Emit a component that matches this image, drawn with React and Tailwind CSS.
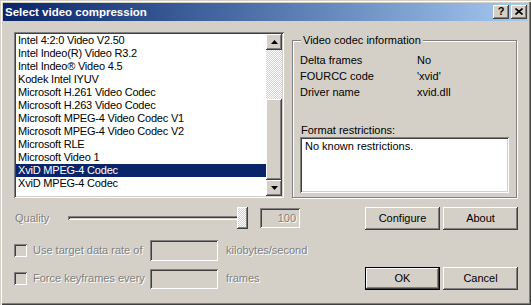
import React from "react";

const raised =
	"shadow-[inset_-1px_-1px_0_#404040,inset_1px_1px_0_#fff,inset_-2px_-2px_0_#808080]";
const sunken =
	"shadow-[inset_1px_1px_0_#808080,inset_-1px_-1px_0_#fff,inset_2px_2px_0_#404040,inset_-2px_-2px_0_#d4d0c8]";
const dim = "text-[#808080] [text-shadow:1px_1px_0_#fff]";

const codecs = [
	"Intel 4:2:0 Video V2.50",
	"Intel Indeo(R) Video R3.2",
	"Intel Indeo® Video 4.5",
	"Kodek Intel IYUV",
	"Microsoft H.261 Video Codec",
	"Microsoft H.263 Video Codec",
	"Microsoft MPEG-4 Video Codec V1",
	"Microsoft MPEG-4 Video Codec V2",
	"Microsoft RLE",
	"Microsoft Video 1",
	"XviD MPEG-4 Codec",
	"XviD MPEG-4 Codec",
];

const Arrow = ({ down }) => (
	<svg width="7" height="4" viewBox="0 0 7 4">
		<path d={down ? "M0 0H7L3.5 4Z" : "M0 4H7L3.5 0Z"} fill="#000" />
	</svg>
);

const Button = ({ children, isDefault, className = "" }) => (
	<button
		className={`h-[23px] w-[75px] bg-[#d4d0c8] text-black ${
			isDefault
				? "shadow-[inset_0_0_0_1px_#000,inset_-2px_-2px_0_#404040,inset_2px_2px_0_#fff,inset_-3px_-3px_0_#808080]"
				: raised
		} ${className}`}
	>
		{children}
	</button>
);

const App = () => {
	return (
		<div
			className="flex h-[305px] w-[531px] flex-col bg-[#d4d0c8] p-[3px] text-[11px] leading-[13px] text-black shadow-[inset_1px_1px_0_#d4d0c8,inset_2px_2px_0_#fff,inset_-1px_-1px_0_#404040,inset_-2px_-2px_0_#808080]"
			style={{ fontFamily: '"Liberation Sans", Arial, sans-serif' }}
		>
			{/* title bar */}
			<div className="flex h-[18px] items-center justify-between bg-gradient-to-r from-[#0a246a] to-[#a6caf0] pl-[2px] pr-[1px]">
				<span className="text-[11.5px] font-bold text-white">Select video compression</span>
				<div className="flex gap-[2px]">
					<div className={`flex h-[14px] w-[16px] items-center justify-center bg-[#d4d0c8] pb-[1px] text-[11px] font-bold ${raised}`}>
						?
					</div>
					<div className={`flex h-[14px] w-[16px] items-center justify-center bg-[#d4d0c8] pb-[1px] ${raised}`}>
						<svg width="8" height="7" viewBox="0 0 8 7">
							<path d="M0.5 0.5L7.5 6.5M7.5 0.5L0.5 6.5" stroke="#000" strokeWidth="1.6" />
						</svg>
					</div>
				</div>
			</div>

			<div className="flex flex-col pl-[11px]">
				{/* list + info */}
				<div className="mt-[11px] flex h-[166px]">
					<div className={`flex w-[270px] bg-white p-[2px] ${sunken}`}>
						<div className="flex-1 overflow-hidden tracking-[-0.2px]">
							{codecs.map((c, i) => (
								<div
									key={i}
									className={`h-[13px] whitespace-nowrap pl-[2px] ${
										i === 10 ? "bg-[#0a246a] text-white" : ""
									}`}
								>
									{c}
								</div>
							))}
						</div>
						<div className="flex w-[16px] flex-col">
							<div className={`flex h-[16px] items-center justify-center bg-[#d4d0c8] ${raised}`}>
								<Arrow />
							</div>
							<div className="h-[49px] bg-[repeating-conic-gradient(#d4d0c8_0_25%,#fff_0_50%)] bg-[length:2px_2px]" />
							<div className={`flex-1 bg-[#d4d0c8] ${raised}`} />
							<div className={`flex h-[16px] items-center justify-center bg-[#d4d0c8] ${raised}`}>
								<Arrow down />
							</div>
						</div>
					</div>

					<div className="relative ml-[8px] mt-[8px] flex h-[158px] w-[225px] flex-col border border-[#808080] px-[7px] shadow-[inset_1px_1px_0_#fff,1px_1px_0_#fff]">
						<span className="absolute -top-[7px] left-[8px] bg-[#d4d0c8] px-[2px]">
							Video codec information
						</span>
						<div className="pt-[11px]">
							{[
								["Delta frames", "No"],
								["FOURCC code", "'xvid'"],
								["Driver name", "xvid.dll"],
							].map(([k, v]) => (
								<div key={k} className="flex h-[16px] items-center">
									<span className="w-[117px]">{k}</span>
									<span>{v}</span>
								</div>
							))}
						</div>
						<div className="flex-1" />
						<div className="h-[13px] pl-[1px]">Format restrictions:</div>
						<div className={`mb-[4px] h-[56px] bg-white px-[5px] pt-[3px] ${sunken}`}>
							No known restrictions.
						</div>
					</div>
				</div>

				{/* quality row */}
				<div className="mt-[9px] flex h-[22px] items-center">
					<span className={`w-[54px] pl-[1px] ${dim}`}>Quality</span>
					<div className="relative h-[22px] w-[180px]">
						<div className="absolute left-0 right-[2px] top-[9px] h-[4px] shadow-[inset_1px_1px_0_#808080,inset_-1px_-1px_0_#fff,inset_2px_2px_0_#404040]" />
						<div className={`absolute right-0 top-0 h-[22px] w-[11px] bg-[repeating-conic-gradient(#d4d0c8_0_25%,#fff_0_50%)] bg-[length:2px_2px] ${raised}`} />
					</div>
					<div className={`ml-[12px] flex h-[20px] w-[40px] items-center justify-end pr-[4px] ${sunken} ${dim}`}>
						100
					</div>
					<Button className="ml-[65px]">Configure</Button>
					<Button className="ml-[3px]">About</Button>
				</div>

				{/* target data rate */}
				<div className="mt-[11px] flex h-[21px] items-center">
					<div className={`h-[13px] w-[13px] bg-[#d4d0c8] ${sunken}`} />
					<span className={`ml-[6px] w-[117px] ${dim}`}>Use target data rate of</span>
					<div className={`h-[21px] w-[68px] ${sunken}`} />
					<span className={`ml-[8px] ${dim}`}>kilobytes/second</span>
				</div>

				{/* keyframes + OK/Cancel */}
				<div className="mt-[6px] flex h-[23px] items-center">
					<div className={`h-[13px] w-[13px] bg-[#d4d0c8] ${sunken}`} />
					<span className={`ml-[6px] w-[117px] ${dim}`}>Force keyframes every</span>
					<div className={`h-[20px] w-[68px] ${sunken}`} />
					<span className={`ml-[8px] w-[139px] ${dim}`}>frames</span>
					<Button isDefault>OK</Button>
					<Button className="ml-[3px]">Cancel</Button>
				</div>
			</div>
		</div>
	);
};

export default App;
